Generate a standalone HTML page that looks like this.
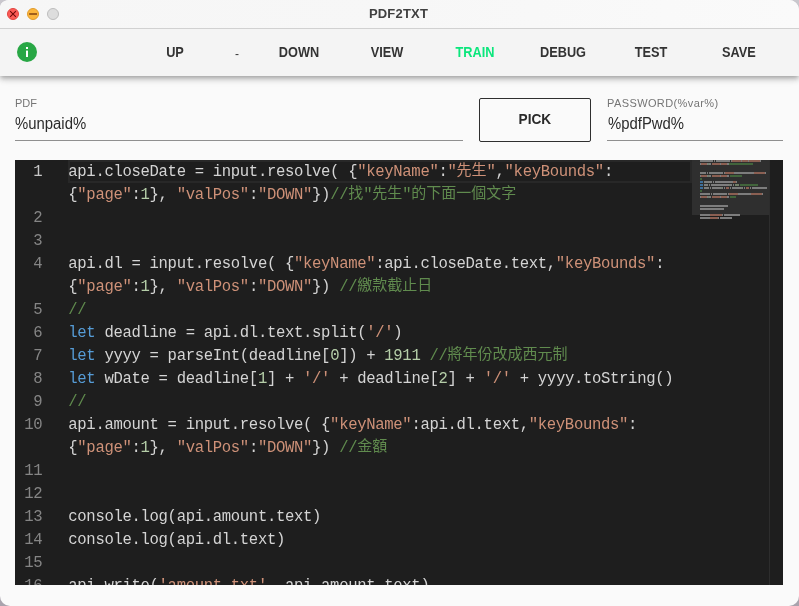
<!DOCTYPE html>
<html lang="en">
<head>
<meta charset="utf-8">
<title>PDF2TXT</title>
<style>
html,body{margin:0;padding:0;}
body{width:799px;height:606px;overflow:hidden;background:linear-gradient(#c9c7cd 0,#c9c7cd 50%,#a9a3ad 50%,#a9a3ad 100%);font-family:"Liberation Sans",sans-serif;}
#win{will-change:transform;position:absolute;left:0;top:0;width:799px;height:606px;background:#fafafa;border-radius:10px 10px 10px 10px / 7px 10px 10px 10px;overflow:hidden;}
#title{z-index:2;position:absolute;left:0;top:0;width:799px;height:28px;background:linear-gradient(90deg,#f6f6f6,#f7f7f7 50%,#fafafa);border-bottom:1px solid #d1d1d1;box-sizing:content-box;}
#title .t{position:absolute;left:-1px;width:799px;top:0;line-height:28px;text-align:center;font-weight:bold;font-size:13px;letter-spacing:.2px;color:#404040;}
.tl{position:absolute;top:8px;width:12px;height:12px;border-radius:50%;box-sizing:border-box;}
#toolbar{position:absolute;left:0;top:29px;width:799px;height:47px;background:#f4f4f4;box-shadow:0 2px 4px -1px rgba(0,0,0,.2),0 4px 5px 0 rgba(0,0,0,.14),0 1px 10px 0 rgba(0,0,0,.12);}
.mb{position:absolute;top:0;height:47px;line-height:47px;width:88px;text-align:center;font-weight:bold;font-size:14px;color:#333;transform:scaleX(.91);}
.lbl{position:absolute;font-size:11px;color:#757575;line-height:14px;white-space:nowrap;}
.val{position:absolute;font-size:16px;color:#2b2b2b;line-height:20px;white-space:nowrap;transform:scaleX(.93);transform-origin:0 50%;}
.ul{position:absolute;height:1px;background:#8f8f8f;}
#pick{position:absolute;left:479px;top:98px;width:112px;height:44px;box-sizing:border-box;border:1px solid #2f2f2f;border-radius:2px;text-align:center;line-height:40px;font-weight:bold;font-size:15px;color:#2a2a2a;}
#ed{position:absolute;left:15px;top:160px;width:768px;height:425px;background:#1e1e1e;overflow:hidden;font-family:"Liberation Mono","Noto Sans CJK TC",monospace;font-size:15.6px;letter-spacing:-0.33px;color:#d4d4d4;}
.ln{position:absolute;left:0;margin-top:1px;width:27.4px;text-align:right;line-height:23px;height:23px;color:#858585;}
.ln.a{color:#c6c6c6;}
.cl{position:absolute;left:53.3px;margin-top:1px;line-height:23px;height:23px;white-space:pre;}
.s{color:#ce9178}.k{color:#569cd6}.n{color:#b5cea8}.c{color:#608b4e}
.z{display:inline-block;position:relative;width:15px;height:23px;vertical-align:top;overflow:hidden;font-style:normal;font-family:"Liberation Mono","Noto Sans CJK TC",monospace;font-size:15px;letter-spacing:0;line-height:21px;text-align:center;}
#cur{position:absolute;left:53px;top:0;width:624px;height:23px;box-sizing:border-box;border:2px solid #282828;}
#mm{position:absolute;left:677px;top:0;width:78px;height:425px;}
#mms{position:absolute;left:677px;top:0;width:78px;height:54.5px;background:#2f2f2f;}
#ov{position:absolute;left:754px;top:0;width:1px;height:425px;background:#2d2d2d;}
</style>
</head>
<body>
<div id="win">
  <div id="title">
    <div class="tl" style="left:7px;background:#fc5b57;border:1px solid #e2443f;"></div>
    <svg style="position:absolute;left:7px;top:8px" width="12" height="12" viewBox="0 0 12 12"><path d="M3.1 3.1l5.8 5.8M8.9 3.1l-5.8 5.8" stroke="#6e0a0a" stroke-width="1.05" fill="none"/></svg>
    <div class="tl" style="left:27px;background:#fcb63c;border:1px solid #e19c2c;"></div>
    <svg style="position:absolute;left:27px;top:8px" width="12" height="12" viewBox="0 0 12 12"><path d="M2.1 6h7.9" stroke="#a05f1c" stroke-width="2" fill="none"/></svg>
    <div class="tl" style="left:47px;background:#dddddd;border:1px solid #bdbdbd;"></div>
    <div class="t">PDF2TXT</div>
  </div>
  <div id="toolbar">
    <svg style="position:absolute;left:17px;top:13px" width="20" height="20" viewBox="0 0 20 20"><circle cx="10" cy="10" r="10" fill="#28a745"/><rect x="9" y="8.6" width="2" height="6.4" fill="#fff"/><rect x="9" y="5" width="2" height="2" fill="#fff"/></svg>
    <div class="mb" style="left:131px">UP</div>
    <div class="mb" style="left:219px;top:2px;width:36px;font-weight:normal;font-size:12px;transform:none;">-</div>
    <div class="mb" style="left:255px">DOWN</div>
    <div class="mb" style="left:343px">VIEW</div>
    <div class="mb" style="left:431px;color:#0be67c">TRAIN</div>
    <div class="mb" style="left:519px">DEBUG</div>
    <div class="mb" style="left:607px">TEST</div>
    <div class="mb" style="left:695px">SAVE</div>
  </div>
  <div class="lbl" style="left:15px;top:96px">PDF</div>
  <div class="val" style="left:15px;top:114px">%unpaid%</div>
  <div class="ul" style="left:15px;top:140px;width:448px"></div>
  <div id="pick"><span style="display:inline-block;transform:scaleX(.91)">PICK</span></div>
  <div class="lbl" style="left:607px;top:96px;letter-spacing:.4px">PASSWORD(%var%)</div>
  <div class="val" style="left:608px;top:114px">%pdfPwd%</div>
  <div class="ul" style="left:607px;top:140px;width:176px"></div>
  <div id="ed">
    <div id="cur"></div>
<div class="ln a" style="top:0px">1</div>
<div class="cl" style="top:0px">api.closeDate = input.resolve( {<span class="s">"keyName"</span>:<span class="s">"<i class="z">先</i><i class="z">生</i>"</span>,<span class="s">"keyBounds"</span>:</div>
<div class="cl" style="top:23px">{<span class="s">"page"</span>:<span class="n">1</span>}, <span class="s">"valPos"</span>:<span class="s">"DOWN"</span>})<span class="c">//<i class="z">找</i>"<i class="z">先</i><i class="z">生</i>"<i class="z">的</i><i class="z">下</i><i class="z">面</i><i class="z">一</i><i class="z">個</i><i class="z">文</i><i class="z">字</i></span></div>
<div class="ln" style="top:46px">2</div>
<div class="ln" style="top:69px">3</div>
<div class="ln" style="top:92px">4</div>
<div class="cl" style="top:92px">api.dl = input.resolve( {<span class="s">"keyName"</span>:api.closeDate.text,<span class="s">"keyBounds"</span>:</div>
<div class="cl" style="top:115px">{<span class="s">"page"</span>:<span class="n">1</span>}, <span class="s">"valPos"</span>:<span class="s">"DOWN"</span>}) <span class="c">//<i class="z">繳</i><i class="z">款</i><i class="z">截</i><i class="z">止</i><i class="z">日</i></span></div>
<div class="ln" style="top:138px">5</div>
<div class="cl" style="top:138px"><span class="c">//</span></div>
<div class="ln" style="top:161px">6</div>
<div class="cl" style="top:161px"><span class="k">let</span> deadline = api.dl.text.split(<span class="s">'/'</span>)</div>
<div class="ln" style="top:184px">7</div>
<div class="cl" style="top:184px"><span class="k">let</span> yyyy = parseInt(deadline[<span class="n">0</span>]) + <span class="n">1911</span> <span class="c">//<i class="z">將</i><i class="z">年</i><i class="z">份</i><i class="z">改</i><i class="z">成</i><i class="z">西</i><i class="z">元</i><i class="z">制</i></span></div>
<div class="ln" style="top:207px">8</div>
<div class="cl" style="top:207px"><span class="k">let</span> wDate = deadline[<span class="n">1</span>] + <span class="s">'/'</span> + deadline[<span class="n">2</span>] + <span class="s">'/'</span> + yyyy.toString()</div>
<div class="ln" style="top:230px">9</div>
<div class="cl" style="top:230px"><span class="c">//</span></div>
<div class="ln" style="top:253px">10</div>
<div class="cl" style="top:253px">api.amount = input.resolve( {<span class="s">"keyName"</span>:api.dl.text,<span class="s">"keyBounds"</span>:</div>
<div class="cl" style="top:276px">{<span class="s">"page"</span>:<span class="n">1</span>}, <span class="s">"valPos"</span>:<span class="s">"DOWN"</span>}) <span class="c">//<i class="z">金</i><i class="z">額</i></span></div>
<div class="ln" style="top:299px">11</div>
<div class="ln" style="top:322px">12</div>
<div class="ln" style="top:345px">13</div>
<div class="cl" style="top:345px">console.log(api.amount.text)</div>
<div class="ln" style="top:368px">14</div>
<div class="cl" style="top:368px">console.log(api.dl.text)</div>
<div class="ln" style="top:391px">15</div>
<div class="ln" style="top:414px">16</div>
<div class="cl" style="top:414px">api.write(<span class="s">'amount.txt'</span>, api.amount.text)</div>
    <div id="mms"></div>
    <svg id="mm" viewBox="0 0 78 425" shape-rendering="crispEdges"><path fill="#7d7d7d" d="M8 0h13v2h-13zM22 0h1v2h-1zM24 0h14v2h-14zM39 0h1v2h-1zM49 0h1v2h-1zM56 0h1v2h-1zM68 0h1v2h-1zM8 3h1v2h-1zM15 3h1v2h-1zM17 3h2v2h-2zM28 3h1v2h-1zM35 3h2v2h-2zM8 12h6v2h-6zM15 12h1v2h-1zM17 12h14v2h-14zM32 12h1v2h-1zM42 12h20v2h-20zM73 12h1v2h-1zM8 15h1v2h-1zM15 15h1v2h-1zM17 15h2v2h-2zM28 15h1v2h-1zM35 15h2v2h-2zM12 21h8v2h-8zM21 21h1v2h-1zM23 21h18v2h-18zM44 21h1v2h-1zM12 24h4v2h-4zM17 24h1v2h-1zM19 24h18v2h-18zM38 24h2v2h-2zM41 24h1v2h-1zM12 27h5v2h-5zM18 27h1v2h-1zM20 27h9v2h-9zM30 27h1v2h-1zM32 27h1v2h-1zM38 27h1v2h-1zM40 27h9v2h-9zM50 27h1v2h-1zM52 27h1v2h-1zM58 27h1v2h-1zM60 27h15v2h-15zM8 33h10v2h-10zM19 33h1v2h-1zM21 33h14v2h-14zM36 33h1v2h-1zM46 33h13v2h-13zM70 33h1v2h-1zM8 36h1v2h-1zM15 36h1v2h-1zM17 36h2v2h-2zM28 36h1v2h-1zM35 36h2v2h-2zM8 45h28v2h-28zM8 48h24v2h-24zM8 54h10v2h-10zM30 54h1v2h-1zM32 54h16v2h-16zM8 57h10v2h-10zM26 57h1v2h-1zM28 57h12v2h-12z"/><path fill="#8b5f52" d="M40 0h9v2h-9zM50 0h6v2h-6zM57 0h11v2h-11zM9 3h6v2h-6zM20 3h8v2h-8zM29 3h6v2h-6zM33 12h9v2h-9zM62 12h11v2h-11zM9 15h6v2h-6zM20 15h8v2h-8zM29 15h6v2h-6zM41 21h3v2h-3zM34 27h3v2h-3zM54 27h3v2h-3zM37 33h9v2h-9zM59 33h11v2h-11zM9 36h6v2h-6zM20 36h8v2h-8zM29 36h6v2h-6zM18 54h12v2h-12zM18 57h8v2h-8z"/><path fill="#728068" d="M16 3h1v2h-1zM16 15h1v2h-1zM37 24h1v2h-1zM43 24h4v2h-4zM29 27h1v2h-1zM49 27h1v2h-1zM16 36h1v2h-1z"/><path fill="#41643b" d="M37 3h24v2h-24zM38 15h12v2h-12zM8 18h2v2h-2zM48 24h18v2h-18zM8 30h2v2h-2zM38 36h6v2h-6z"/><path fill="#3f6f9b" d="M8 21h3v2h-3zM8 24h3v2h-3zM8 27h3v2h-3z"/></svg>
    <div id="ov"></div>
  </div>
</div>
</body>
</html>
